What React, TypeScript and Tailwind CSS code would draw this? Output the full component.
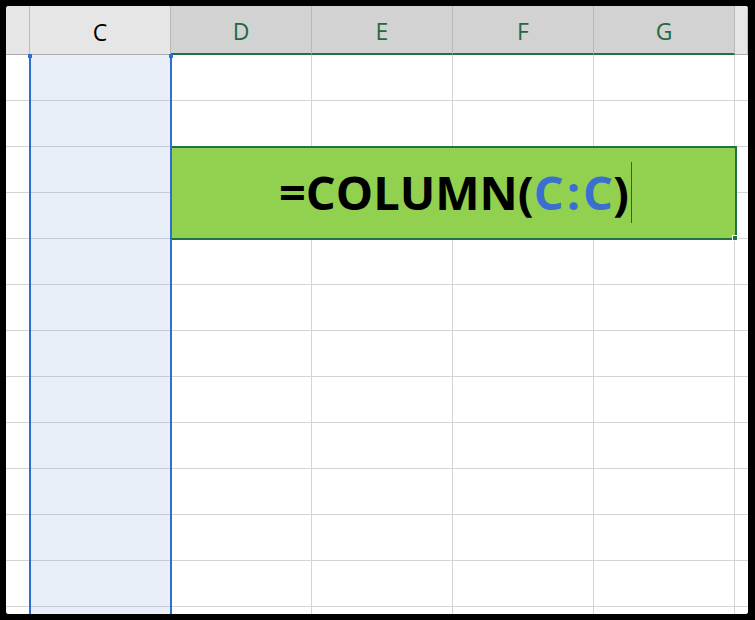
const cols = ["B", "C", "D", "E", "F", "G", "H"];
const rowCount = 13;

// D..G are the columns covered by the merged, selected range
const active = ["D", "E", "F", "G"];

function HeaderCell({ name }: { name: string }) {
  if (name === "B" || name === "H") {
    return <div className="bg-[#e6e6e6] border-b border-[#ababab] border-r border-r-[#bdbdbd]" />;
  }
  const on = active.includes(name);
  return (
    <div
      className={
        on
          ? "flex items-center justify-center bg-[#d2d2d2] border-r border-r-[#b8b8b8] border-b-2 border-b-[#217346] text-[#1f6b3f]"
          : "flex items-center justify-center bg-[#e6e6e6] border-r border-r-[#b8b8b8] border-b border-b-[#ababab] text-black"
      }
    >
      <span className="text-[23px] leading-none pt-[4px]">{name}</span>
    </div>
  );
}

function SelectedColumn() {
  return (
    <div className="relative col-start-2 row-start-2 row-end-[15] mx-[-1px] border-x-2 border-[#2f6ed1] bg-[#e8eff9] z-20">
      {Array.from({ length: rowCount }).map((_, i) => (
        <div key={i} className="h-[46px] border-b border-[#c3cad6]" />
      ))}
      <span className="absolute -left-[3px] -top-[1px] w-[4px] h-[4px] bg-[#2f6ed1]" />
      <span className="absolute -right-[3px] -top-[1px] w-[4px] h-[4px] bg-[#2f6ed1]" />
    </div>
  );
}

function MergedCell() {
  return (
    <div className="relative col-start-3 col-end-7 row-start-4 row-end-6 z-10 ml-[-1px] mr-[-2px] mt-[-1px] mb-[-1px] flex items-center justify-center bg-[#92d050] border-2 border-[#217346]">
      <div className="flex items-center font-bold text-[47px] leading-none text-black pb-[2px] pl-[4px]">
        <span>=COLUMN(</span>
        <span className="text-[#3a6fd0]">
          C<span className="mx-[3px]">:</span>C
        </span>
        <span>)</span>
        <span className="ml-[2px] w-px h-[61px] bg-[#5b3e8e]" />
      </div>
      <span className="absolute -right-[3px] -bottom-[3px] w-[6px] h-[6px] bg-[#217346] border border-white" />
    </div>
  );
}

export default function App() {
  const body: React.ReactNode[] = [];
  for (let r = 0; r < rowCount; r++) {
    cols.forEach((c) => {
      if (c === "C") return;
      const merged = (r === 2 || r === 3) && active.includes(c);
      if (merged) return;
      body.push(
        <div
          key={`${c}${r}`}
          className={
            c === "H"
              ? "bg-white border-b border-[#d4d4d4]"
              : "bg-white border-b border-r border-[#d4d4d4]"
          }
        />
      );
    });
  }

  return (
    <div
      className="w-[755px] h-[620px] bg-black pl-[6px] pt-[6px] pr-[7px] pb-[6px]"
      style={{ fontFamily: '"Open Sans", "Noto Sans", sans-serif' }}
    >
      <div className="w-full h-full overflow-hidden bg-white rounded-[3px]">
        <div className="grid grid-cols-[24px_141px_141px_141px_141px_141px_13px] grid-rows-[49px_repeat(13,46px)]">
          {cols.map((c) => (
            <HeaderCell key={c} name={c} />
          ))}
          <SelectedColumn />
          <MergedCell />
          {body}
        </div>
      </div>
    </div>
  );
}
